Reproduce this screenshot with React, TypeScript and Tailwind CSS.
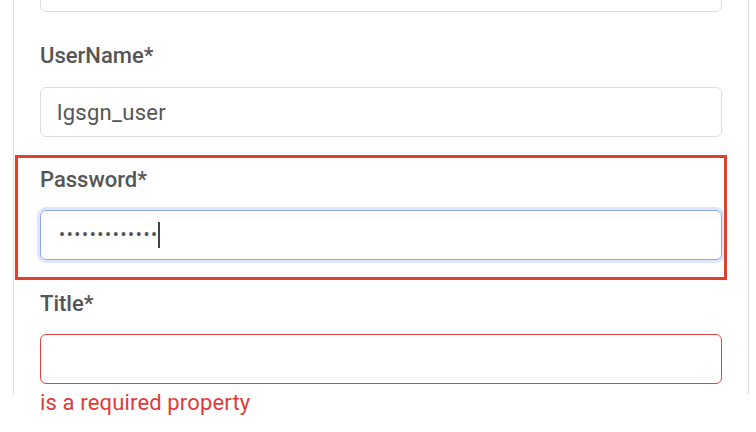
export default function App() {
  return (
    <div className="w-[756px] h-[432px] overflow-hidden bg-white font-['Roboto',sans-serif]">
      <div className="ml-[13px] w-[736px] h-full border-x border-[#dcdcdc] pl-[26px] pr-[26px]">
        {/* previous field, scrolled off the top */}
        <div className="-mt-[38px] h-[50px] rounded-md border border-[#dcdcdc]" />

        <div className="mt-[32px]">
          <label className="block text-[22px] leading-6 font-medium text-[#555]">UserName*</label>
          <div className="mt-[19px] h-[50px] rounded-md border border-[#dcdcdc] px-4 flex items-center text-[22px] tracking-[0.3px] text-[#555]">
            lgsgn_user
          </div>
        </div>

        <div className="relative mt-[31px]">
          {/* highlight box around the password group */}
          <div className="absolute -left-[25px] -top-[13px] w-[712px] h-[125px] border-[3px] border-[#e1412b] pointer-events-none" />
          <label className="block text-[22px] leading-6 font-medium text-[#555]">Password*</label>
          <div className="mt-[18px] h-[50px] rounded-md border border-[#8ea6f0] ring-[3px] ring-[#dfe6fb] pl-[18px] flex items-center text-[#555]">
            <span className="text-[18px] tracking-[1.6px] leading-none">•••••••••••••</span>
            <span className="-ml-[1px] w-[2px] h-[26px] bg-[#444]" />
          </div>
        </div>

        <div className="mt-[32px]">
          <label className="block text-[22px] leading-6 font-medium text-[#555]">Title*</label>
          <div className="mt-[18px] h-[50px] rounded-md border border-[#e04545]" />
          <p className="mt-[7px] text-[22px] leading-6 tracking-[0.15px] text-[#e03a3a]">is a required property</p>
        </div>
      </div>
    </div>
  );
}
